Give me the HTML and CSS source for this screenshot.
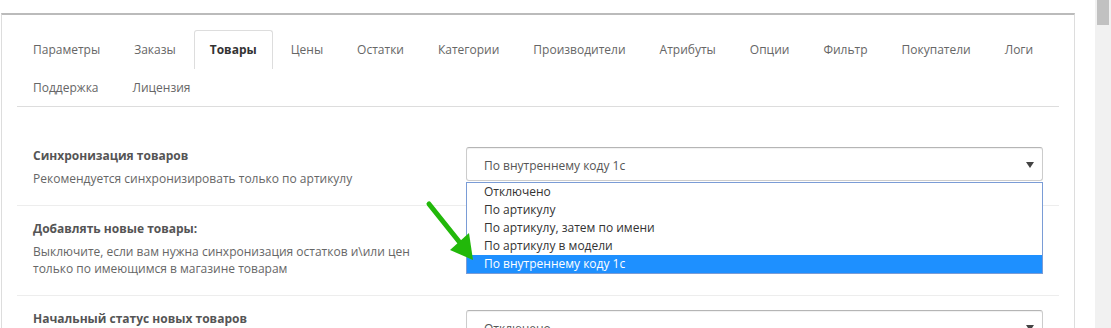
FILE: index.html
```html
<!DOCTYPE html>
<html lang="ru">
<head>
  <meta charset="UTF-8" />
  <title>Настройки обмена – Товары</title>
  <link rel="stylesheet" href="styles.css">
</head>
<body>
  <div class="page">
    <div class="panel">
      <ul class="nav-tabs">
        <li><a>Параметры</a></li>
        <li><a>Заказы</a></li>
        <li class="active"><a>Товары</a></li>
        <li><a>Цены</a></li>
        <li><a>Остатки</a></li>
        <li><a>Категории</a></li>
        <li><a>Производители</a></li>
        <li><a>Атрибуты</a></li>
        <li><a>Опции</a></li>
        <li><a>Фильтр</a></li>
        <li><a>Покупатели</a></li>
        <li><a>Логи</a></li>
        <li><a>Поддержка</a></li>
        <li><a>Лицензия</a></li>
      </ul>

      <div class="tab-content">
        <div class="form-group first">
          <div class="label-col">
            <div class="label">Синхронизация товаров</div>
            <div class="help">Рекомендуется синхронизировать только по артикулу</div>
          </div>
          <div class="control-col">
            <div class="select">
              <span>По внутреннему коду 1с</span>
              <span class="caret"></span>
              <ul class="dropdown">
                <li>Отключено</li>
                <li>По артикулу</li>
                <li>По артикулу, затем по имени</li>
                <li>По артикулу в модели</li>
                <li class="selected">По внутреннему коду 1с</li>
              </ul>
            </div>
          </div>
        </div>

        <div class="form-group">
          <div class="label-col">
            <div class="label">Добавлять новые товары:</div>
            <div class="help">Выключите, если вам нужна синхронизация остатков и\или цен только по имеющимся в магазине товарам</div>
          </div>
          <div class="control-col"></div>
        </div>

        <div class="form-group">
          <div class="label-col">
            <div class="label">Начальный статус новых товаров</div>
          </div>
          <div class="control-col">
            <div class="select">
              <span>Отключено</span>
              <span class="caret"></span>
            </div>
          </div>
        </div>
      </div>

      <svg class="pointer" width="70" height="75" viewBox="415 195 70 75">
        <line x1="428" y1="204" x2="460" y2="244" stroke="#22b80a" stroke-width="5" stroke-linecap="round" />
        <polygon points="472,260 449,250 468,233" fill="#22b80a" />
      </svg>
    </div>
  </div>
  <div class="scrollbar"><div class="thumb"></div></div>
</body>
</html>
```

FILE: styles.css
```css
body {
  margin: 0;
  height: 328px;
  overflow: hidden;
  display: flex;
  background: #fff;
  font-family: "Open Sans", Arial, sans-serif;
  font-size: 12px;
  color: #666;
}
.page {
  flex: 1;
  padding: 13px 20px 0 1px;
}
.panel {
  position: relative;
  border-top: 2px solid #bbb;
  border-left: 1px solid #ddd;
  border-right: 1px solid #ddd;
  padding: 15px 15px 0 15px;
  height: 400px;
}
.nav-tabs {
  list-style: none;
  margin: 0;
  padding: 0;
  display: flex;
  flex-wrap: wrap;
  border-bottom: 1px solid #ddd;
}
.nav-tabs li {
  margin-right: 2px;
}
.nav-tabs a {
  display: block;
  padding: 10px 15px;
  line-height: 17px;
  border: 1px solid transparent;
  border-bottom: none;
  border-radius: 3px 3px 0 0;
  color: #666;
}
.nav-tabs .active a {
  border-color: #ddd;
  background: #fff;
  color: #333;
  font-weight: bold;
  margin-bottom: -1px;
  padding-bottom: 11px;
}
.tab-content {
  padding-top: 26px;
}
.form-group {
  display: flex;
  padding: 14px 0 18px;
  border-top: 1px solid #ededed;
}
.form-group.first {
  border-top: none;
}
.label-col {
  width: 403px;
  padding: 0 15px 0 16px;
}
.label {
  font-weight: bold;
  color: #555;
  line-height: 18px;
}
.help {
  margin-top: 5px;
  line-height: 17px;
}
.control-col {
  flex: 1;
  padding: 0 16px 0 15px;
}
.select {
  position: relative;
  height: 32px;
  box-sizing: content-box;
  border: 1px solid #ccc;
  border-top-color: #b5b5b5;
  border-radius: 3px;
  box-shadow: inset 0 1px 1px rgba(0, 0, 0, 0.06);
  padding: 3px 0 0 17px;
  height: 29px;
  display: flex;
  align-items: center;
  color: #555;
}
.caret {
  position: absolute;
  right: 8px;
  top: 14px;
  border-left: 4px solid transparent;
  border-right: 4px solid transparent;
  border-top: 6px solid #444;
}
.dropdown {
  position: absolute;
  left: -1px;
  right: -1px;
  top: 34px;
  margin: 0;
  padding: 0;
  list-style: none;
  background: #fff;
  border: 1px solid #7a9cd6;
  z-index: 2;
}
.dropdown li {
  height: 18px;
  line-height: 18px;
  padding-left: 17px;
  color: #333;
}
.dropdown li.selected {
  background: #1e90ff;
  color: #fff;
}
.pointer {
  position: absolute;
  left: 414px;
  top: 180px;
  z-index: 3;
}
.scrollbar {
  width: 16px;
  background: #f1f1f1;
  position: relative;
}
.thumb {
  position: absolute;
  left: 2px;
  right: 2px;
  top: 0;
  height: 25px;
  background: #c1c1c1;
}
```
